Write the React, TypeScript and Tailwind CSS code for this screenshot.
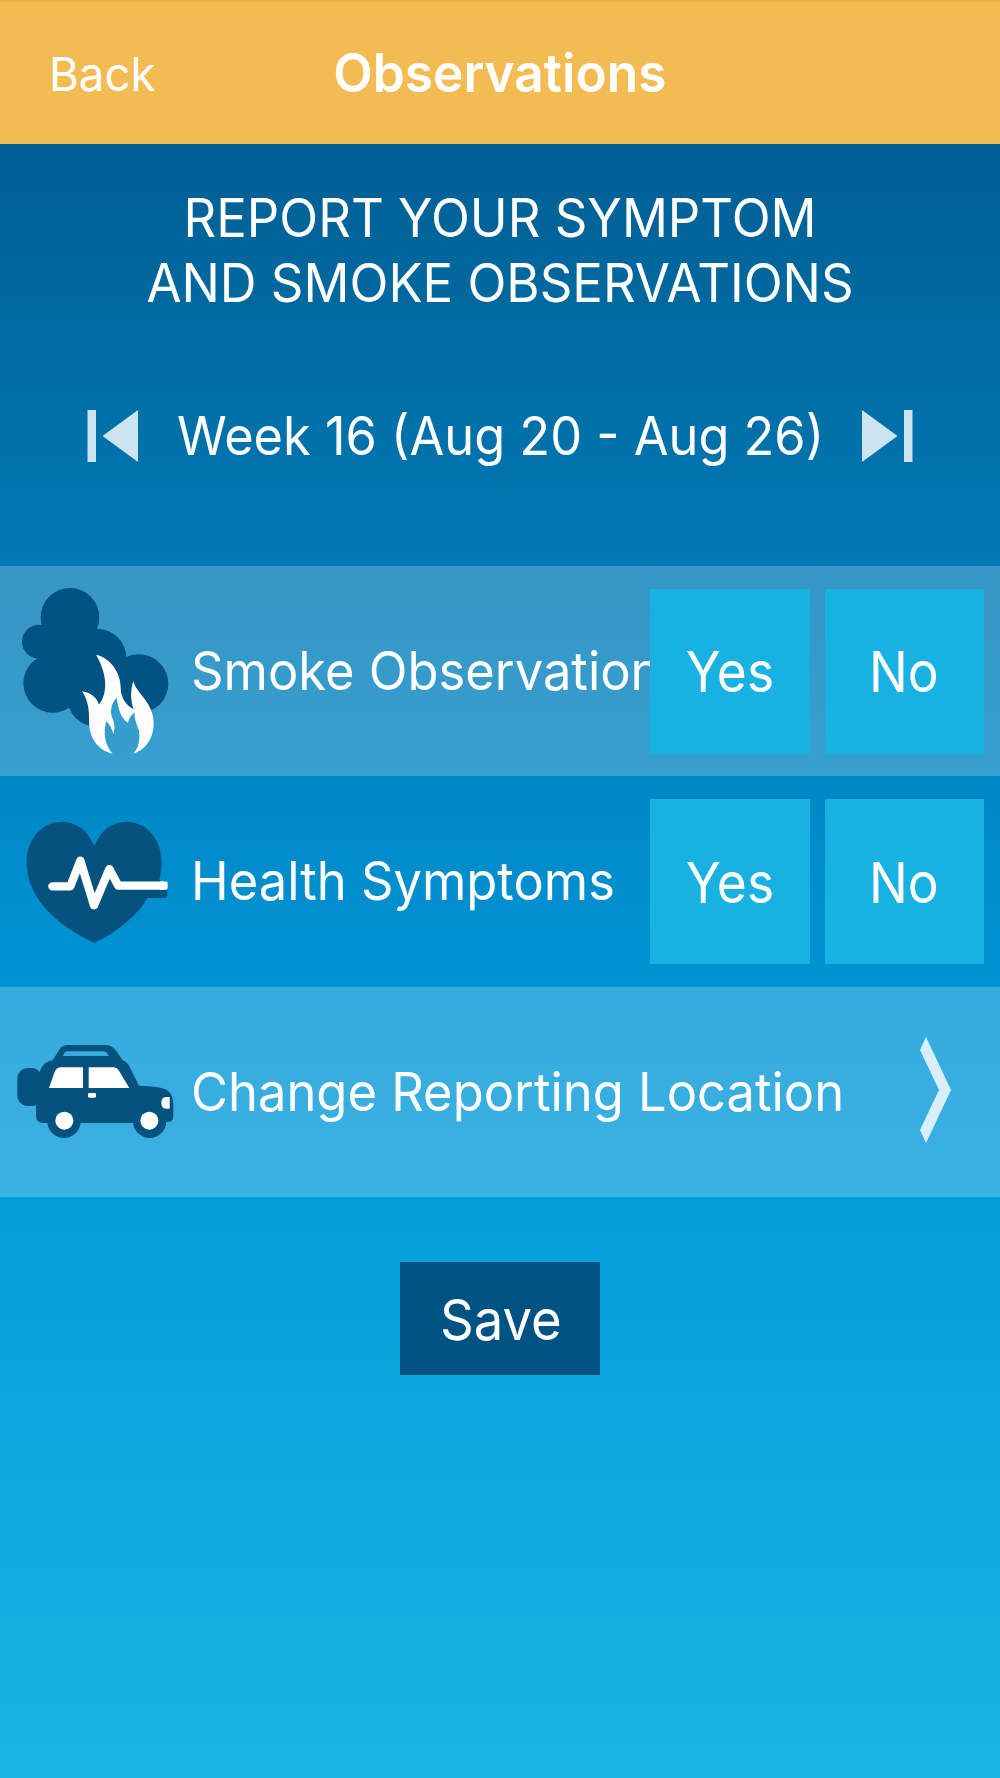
import type { ReactNode } from "react";

const NAVY = "#005282";

function SmokeIcon() {
  return (
    <svg className="h-[200px] w-[180px] shrink-0" viewBox="0 3 540 600">
      <g fill={NAVY}>
        <circle cx="210" cy="142" r="88" />
        <circle cx="117" cy="215" r="51" />
        <circle cx="158" cy="340" r="88" />
        <circle cx="293" cy="263" r="86" />
        <circle cx="417" cy="341" r="88" />
        <circle cx="288" cy="383" r="86" />
        <path d="M130 160h160v160H130zM150 250h200v130H150z" />
      </g>
      <path fill="#359dcc" d="M318 440L351 382L403 425L425 480L402 549H336L280 480Z" />
      <path
        fill="#fff"
        d="M288 254C334 264 362 312 362 352C362 384 378 406 401 418C390 388 392 358 400 333C408 370 461 396 461 460C461 510 432 542 400 551C416 534 422 505 416 480C411 462 402 448 404 428C392 434 388 446 384 458C362 446 355 415 350 384C333 404 329 424 337 444C346 464 344 480 340 492C335 474 328 462 319 454C308 490 316 528 338 551C296 542 266 505 267 450C268 415 262 388 246 364C272 368 290 382 297 404C326 366 320 308 288 254Z"
      />
    </svg>
  );
}

function HeartIcon() {
  return (
    <svg className="h-[200px] w-[180px] shrink-0" viewBox="0 -55 540 600">
      <path
        fill="#05527f"
        d="M283 138C266 92 228 64 186 64C124 64 80 118 80 186C80 290 164 372 283 428C350 396 408 350 443 293H492Q502 293 502 280V262L478 240C482 222 485 204 485 186C485 118 440 64 380 64C336 64 300 92 283 138Z"
      />
      <path
        fill="none"
        stroke="#fff"
        strokeWidth="25"
        strokeLinecap="round"
        strokeLinejoin="round"
        d="M157 258H211L241 181L282 315L328 206L355 256H489"
      />
      <path fill="#fff" d="M480 243.500H498Q503 243.500 503 249V263Q503 268.500 498 268.500H480Z" />
    </svg>
  );
}

function CarIcon() {
  return (
    <svg className="h-[200px] w-[180px] shrink-0" viewBox="0 -84 540 600">
      <g fill="#05527f">
        <rect x="52" y="144" width="74" height="114" rx="32" />
        <path
          fillRule="evenodd"
          d="M204 75H314C328 75 338 80 346 89L368 121C378 124 383 130 388 139L417 197C450 199 480 200 496 208C516 218 520 236 520 256V288Q520 306 503 306L400 309H235L130 309Q108 309 108 288V258L118 160C124 138 136 124 158 121L176 92C183 80 191 75 204 75ZM204 94C197 94 192 98 189 108H326C322 98 317 94 309 94Z"
        />
        <circle cx="192" cy="304" r="50" />
        <circle cx="449" cy="304" r="50" />
      </g>
      <g fill="#fff">
        <path d="M183 142H249V204H147L163 158Q169 142 183 142Z" />
        <path d="M266 142H338Q350 142 357 152L388 204H266Z" />
        <rect x="264" y="219" width="24" height="14" rx="4" />
        <path d="M509 231V266H498Q484 266 484 249Q484 231 498 231Z" />
        <circle cx="193" cy="302" r="27" />
        <circle cx="448" cy="302" r="27" />
      </g>
    </svg>
  );
}

function SkipIcon({ className = "" }: { className?: string }) {
  return (
    <svg className={`h-[52px] w-[51px] ${className}`} viewBox="0 0 51 52" fill="#cce3f0">
      <path d="M0.500 0H9V52H0.500ZM51 0V52L15.500 26Z" />
    </svg>
  );
}

function Choice({ label }: { label: string }) {
  return (
    <button className="flex h-[165px] w-[159.500px] items-center justify-center bg-[#18b2e2] pt-[2px] text-[56px]">
      <span className="scale-x-[0.92]">{label}</span>
    </button>
  );
}

function Row({ icon, label, shaded, children }: { icon: ReactNode; label: string; shaded?: boolean; children: ReactNode }) {
  return (
    <li className={`flex h-[210.400px] items-center ${shaded ? "bg-white/21" : ""}`}>
      {icon}
      <span className="min-w-0 flex-1 pt-px pl-[11px] text-[53px] whitespace-nowrap">
        <span className="inline-block origin-left scale-x-[0.956]">{label}</span>
      </span>
      {children}
    </li>
  );
}

function YesNo() {
  return (
    <div className="relative mr-4 flex shrink-0 gap-[15px]">
      <Choice label="Yes" />
      <Choice label="No" />
    </div>
  );
}

export default function App() {
  return (
    <main className="flex h-[1778px] w-[1000px] flex-col overflow-hidden bg-linear-to-b from-[#005689] via-[#0095d6] via-56% to-[#18b4e4] font-['Inter',sans-serif] text-white">
      <header className="grid h-36 shrink-0 grid-cols-[1fr_auto_1fr] items-center border-t-2 border-[#edb045] bg-[#f2bc53] pt-[2px]">
        <button className="origin-left scale-x-[0.98] justify-self-start pt-px pl-[50px] text-[46.500px]">Back</button>
        <h1 className="scale-x-[0.97] text-[53px] font-semibold">Observations</h1>
      </header>

      <h2 className="mt-[42px] scale-x-[0.96] text-center text-[53px] leading-[65px]">
        REPORT YOUR SYMPTOM
        <br />
        AND SMOKE OBSERVATIONS
      </h2>

      <nav className="mt-[94px] flex h-[52px] shrink-0 items-center justify-between px-[87px]">
        <button><SkipIcon /></button>
        <span className="-mx-10 scale-x-[0.953] pt-px pl-px text-[53px] whitespace-nowrap">Week 16 (Aug 20 - Aug 26)</span>
        <button><SkipIcon className="-scale-x-100" /></button>
      </nav>

      <ul className="mt-[104px] shrink-0">
        <Row icon={<SmokeIcon />} label="Smoke Observation" shaded><YesNo /></Row>
        <Row icon={<HeartIcon />} label="Health Symptoms"><YesNo /></Row>
        <Row icon={<CarIcon />} label="Change Reporting Location" shaded>
          <svg className="mr-[49px] mb-1 h-[106px] w-[31px] shrink-0" viewBox="0 0 31 106" fill="#d8eff9">
            <path d="M6 0L31 53L6 106L0 93L19 53L0 13Z" />
          </svg>
        </Row>
      </ul>

      <button className="mt-[65px] flex h-[113px] w-[200px] shrink-0 items-center justify-center self-center bg-[#005282] pt-[2px] pl-px text-[56px]">
        <span className="scale-x-[0.94]">Save</span>
      </button>
    </main>
  );
}
